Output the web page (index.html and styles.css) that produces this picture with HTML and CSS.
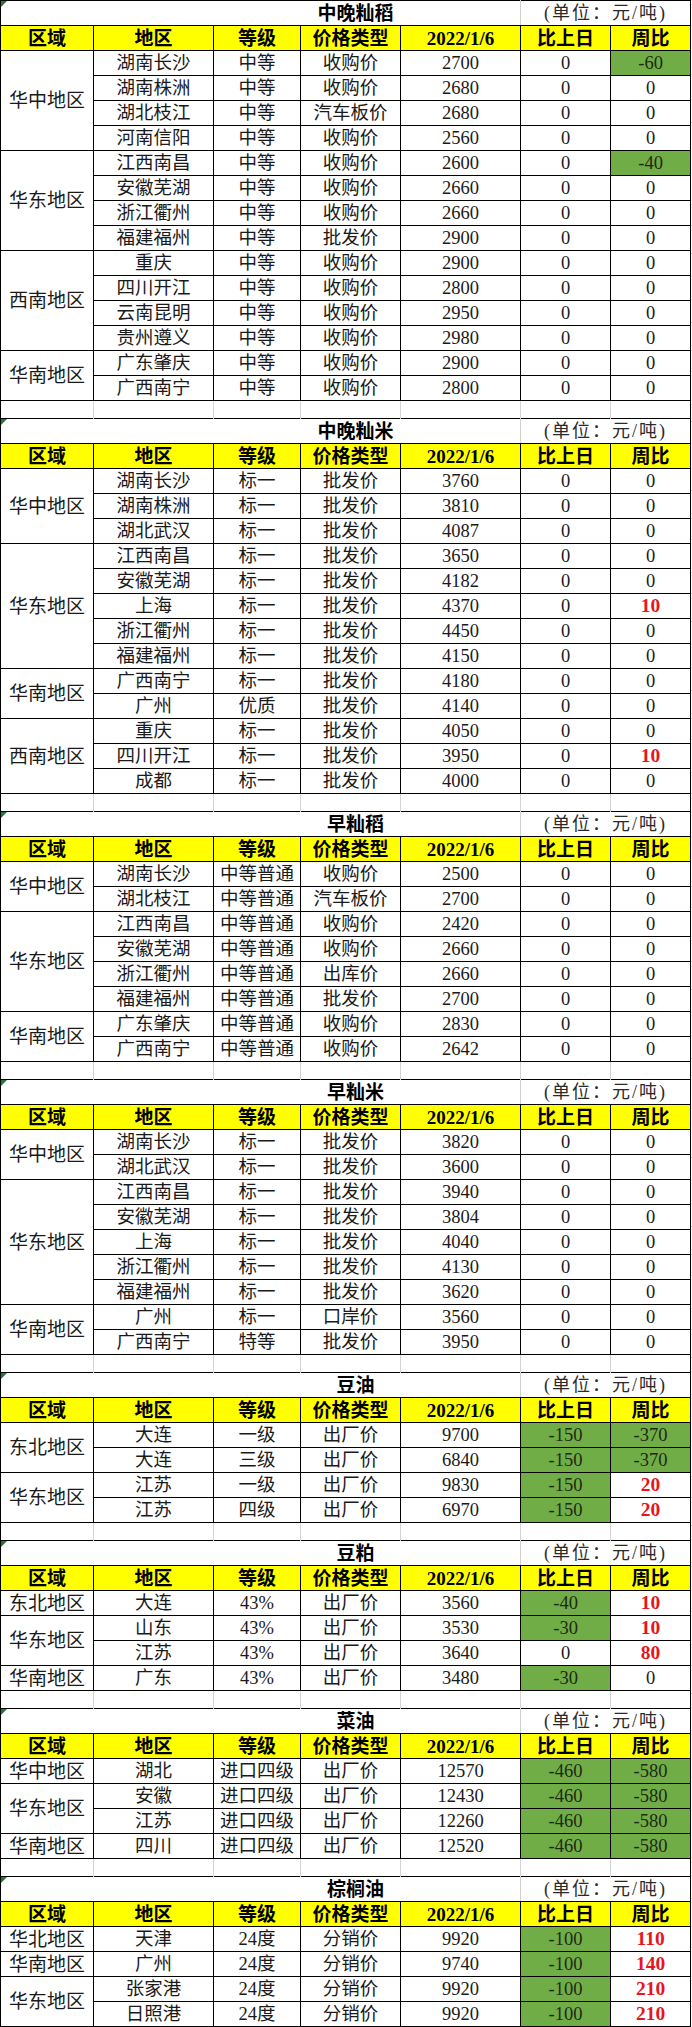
FILE: index.html
```html
<!DOCTYPE html>
<html lang="zh-CN">
<head>
<meta charset="utf-8">
<title>粮油价格</title>
<link rel="stylesheet" href="styles.css">
</head>
<body>
<table class="sheet">
<colgroup>
<col class="c1"><col class="c2"><col class="c3"><col class="c4"><col class="c5"><col class="c6"><col class="c7">
</colgroup>
<tbody>
<!-- 中晚籼稻 -->
<tr class="title"><td class="t-name" colspan="5">中晚籼稻</td><td class="t-unit" colspan="2">(单位：元/吨)</td></tr>
<tr class="head"><th>区域</th><th>地区</th><th>等级</th><th>价格类型</th><th class="hd">2022/1/6</th><th>比上日</th><th>周比</th></tr>
<tr class="row"><td class="reg" rowspan="4">华中地区</td><td>湖南长沙</td><td>中等</td><td>收购价</td><td>2700</td><td>0</td><td class="g">-60</td></tr>
<tr class="row"><td>湖南株洲</td><td>中等</td><td>收购价</td><td>2680</td><td>0</td><td>0</td></tr>
<tr class="row"><td>湖北枝江</td><td>中等</td><td>汽车板价</td><td>2680</td><td>0</td><td>0</td></tr>
<tr class="row"><td>河南信阳</td><td>中等</td><td>收购价</td><td>2560</td><td>0</td><td>0</td></tr>
<tr class="row"><td class="reg" rowspan="4">华东地区</td><td>江西南昌</td><td>中等</td><td>收购价</td><td>2600</td><td>0</td><td class="g">-40</td></tr>
<tr class="row"><td>安徽芜湖</td><td>中等</td><td>收购价</td><td>2660</td><td>0</td><td>0</td></tr>
<tr class="row"><td>浙江衢州</td><td>中等</td><td>收购价</td><td>2660</td><td>0</td><td>0</td></tr>
<tr class="row"><td>福建福州</td><td>中等</td><td>批发价</td><td>2900</td><td>0</td><td>0</td></tr>
<tr class="row"><td class="reg" rowspan="4">西南地区</td><td>重庆</td><td>中等</td><td>收购价</td><td>2900</td><td>0</td><td>0</td></tr>
<tr class="row"><td>四川开江</td><td>中等</td><td>收购价</td><td>2800</td><td>0</td><td>0</td></tr>
<tr class="row"><td>云南昆明</td><td>中等</td><td>收购价</td><td>2950</td><td>0</td><td>0</td></tr>
<tr class="row"><td>贵州遵义</td><td>中等</td><td>收购价</td><td>2980</td><td>0</td><td>0</td></tr>
<tr class="row"><td class="reg" rowspan="2">华南地区</td><td>广东肇庆</td><td>中等</td><td>收购价</td><td>2900</td><td>0</td><td>0</td></tr>
<tr class="row"><td>广西南宁</td><td>中等</td><td>收购价</td><td>2800</td><td>0</td><td>0</td></tr>
<tr class="blank"><td></td><td></td><td></td><td></td><td></td><td></td><td></td></tr>

<!-- 中晚籼米 -->
<tr class="title"><td class="t-name" colspan="5">中晚籼米</td><td class="t-unit" colspan="2">(单位：元/吨)</td></tr>
<tr class="head"><th>区域</th><th>地区</th><th>等级</th><th>价格类型</th><th class="hd">2022/1/6</th><th>比上日</th><th>周比</th></tr>
<tr class="row"><td class="reg" rowspan="3">华中地区</td><td>湖南长沙</td><td>标一</td><td>批发价</td><td>3760</td><td>0</td><td>0</td></tr>
<tr class="row"><td>湖南株洲</td><td>标一</td><td>批发价</td><td>3810</td><td>0</td><td>0</td></tr>
<tr class="row"><td>湖北武汉</td><td>标一</td><td>批发价</td><td>4087</td><td>0</td><td>0</td></tr>
<tr class="row"><td class="reg" rowspan="5">华东地区</td><td>江西南昌</td><td>标一</td><td>批发价</td><td>3650</td><td>0</td><td>0</td></tr>
<tr class="row"><td>安徽芜湖</td><td>标一</td><td>批发价</td><td>4182</td><td>0</td><td>0</td></tr>
<tr class="row"><td>上海</td><td>标一</td><td>批发价</td><td>4370</td><td>0</td><td class="r">10</td></tr>
<tr class="row"><td>浙江衢州</td><td>标一</td><td>批发价</td><td>4450</td><td>0</td><td>0</td></tr>
<tr class="row"><td>福建福州</td><td>标一</td><td>批发价</td><td>4150</td><td>0</td><td>0</td></tr>
<tr class="row"><td class="reg" rowspan="2">华南地区</td><td>广西南宁</td><td>标一</td><td>批发价</td><td>4180</td><td>0</td><td>0</td></tr>
<tr class="row"><td>广州</td><td>优质</td><td>批发价</td><td>4140</td><td>0</td><td>0</td></tr>
<tr class="row"><td class="reg" rowspan="3">西南地区</td><td>重庆</td><td>标一</td><td>批发价</td><td>4050</td><td>0</td><td>0</td></tr>
<tr class="row"><td>四川开江</td><td>标一</td><td>批发价</td><td>3950</td><td>0</td><td class="r">10</td></tr>
<tr class="row"><td>成都</td><td>标一</td><td>批发价</td><td>4000</td><td>0</td><td>0</td></tr>
<tr class="blank"><td></td><td></td><td></td><td></td><td></td><td></td><td></td></tr>

<!-- 早籼稻 -->
<tr class="title"><td class="t-name" colspan="5">早籼稻</td><td class="t-unit" colspan="2">(单位：元/吨)</td></tr>
<tr class="head"><th>区域</th><th>地区</th><th>等级</th><th>价格类型</th><th class="hd">2022/1/6</th><th>比上日</th><th>周比</th></tr>
<tr class="row"><td class="reg" rowspan="2">华中地区</td><td>湖南长沙</td><td>中等普通</td><td>收购价</td><td>2500</td><td>0</td><td>0</td></tr>
<tr class="row"><td>湖北枝江</td><td>中等普通</td><td>汽车板价</td><td>2700</td><td>0</td><td>0</td></tr>
<tr class="row"><td class="reg" rowspan="4">华东地区</td><td>江西南昌</td><td>中等普通</td><td>收购价</td><td>2420</td><td>0</td><td>0</td></tr>
<tr class="row"><td>安徽芜湖</td><td>中等普通</td><td>收购价</td><td>2660</td><td>0</td><td>0</td></tr>
<tr class="row"><td>浙江衢州</td><td>中等普通</td><td>出库价</td><td>2660</td><td>0</td><td>0</td></tr>
<tr class="row"><td>福建福州</td><td>中等普通</td><td>批发价</td><td>2700</td><td>0</td><td>0</td></tr>
<tr class="row"><td class="reg" rowspan="2">华南地区</td><td>广东肇庆</td><td>中等普通</td><td>收购价</td><td>2830</td><td>0</td><td>0</td></tr>
<tr class="row"><td>广西南宁</td><td>中等普通</td><td>收购价</td><td>2642</td><td>0</td><td>0</td></tr>
<tr class="blank"><td></td><td></td><td></td><td></td><td></td><td></td><td></td></tr>

<!-- 早籼米 -->
<tr class="title"><td class="t-name" colspan="5">早籼米</td><td class="t-unit" colspan="2">(单位：元/吨)</td></tr>
<tr class="head"><th>区域</th><th>地区</th><th>等级</th><th>价格类型</th><th class="hd">2022/1/6</th><th>比上日</th><th>周比</th></tr>
<tr class="row"><td class="reg" rowspan="2">华中地区</td><td>湖南长沙</td><td>标一</td><td>批发价</td><td>3820</td><td>0</td><td>0</td></tr>
<tr class="row"><td>湖北武汉</td><td>标一</td><td>批发价</td><td>3600</td><td>0</td><td>0</td></tr>
<tr class="row"><td class="reg" rowspan="5">华东地区</td><td>江西南昌</td><td>标一</td><td>批发价</td><td>3940</td><td>0</td><td>0</td></tr>
<tr class="row"><td>安徽芜湖</td><td>标一</td><td>批发价</td><td>3804</td><td>0</td><td>0</td></tr>
<tr class="row"><td>上海</td><td>标一</td><td>批发价</td><td>4040</td><td>0</td><td>0</td></tr>
<tr class="row"><td>浙江衢州</td><td>标一</td><td>批发价</td><td>4130</td><td>0</td><td>0</td></tr>
<tr class="row"><td>福建福州</td><td>标一</td><td>批发价</td><td>3620</td><td>0</td><td>0</td></tr>
<tr class="row"><td class="reg" rowspan="2">华南地区</td><td>广州</td><td>标一</td><td>口岸价</td><td>3560</td><td>0</td><td>0</td></tr>
<tr class="row"><td>广西南宁</td><td>特等</td><td>批发价</td><td>3950</td><td>0</td><td>0</td></tr>
<tr class="blank"><td></td><td></td><td></td><td></td><td></td><td></td><td></td></tr>

<!-- 豆油 -->
<tr class="title"><td class="t-name" colspan="5">豆油</td><td class="t-unit" colspan="2">(单位：元/吨)</td></tr>
<tr class="head"><th>区域</th><th>地区</th><th>等级</th><th>价格类型</th><th class="hd">2022/1/6</th><th>比上日</th><th>周比</th></tr>
<tr class="row"><td class="reg" rowspan="2">东北地区</td><td>大连</td><td>一级</td><td>出厂价</td><td>9700</td><td class="g">-150</td><td class="g">-370</td></tr>
<tr class="row"><td>大连</td><td>三级</td><td>出厂价</td><td>6840</td><td class="g">-150</td><td class="g">-370</td></tr>
<tr class="row"><td class="reg" rowspan="2">华东地区</td><td>江苏</td><td>一级</td><td>出厂价</td><td>9830</td><td class="g">-150</td><td class="r">20</td></tr>
<tr class="row"><td>江苏</td><td>四级</td><td>出厂价</td><td>6970</td><td class="g">-150</td><td class="r">20</td></tr>
<tr class="blank"><td></td><td></td><td></td><td></td><td></td><td></td><td></td></tr>

<!-- 豆粕 -->
<tr class="title"><td class="t-name" colspan="5">豆粕</td><td class="t-unit" colspan="2">(单位：元/吨)</td></tr>
<tr class="head"><th>区域</th><th>地区</th><th>等级</th><th>价格类型</th><th class="hd">2022/1/6</th><th>比上日</th><th>周比</th></tr>
<tr class="row"><td class="reg">东北地区</td><td>大连</td><td>43%</td><td>出厂价</td><td>3560</td><td class="g">-40</td><td class="r">10</td></tr>
<tr class="row"><td class="reg" rowspan="2">华东地区</td><td>山东</td><td>43%</td><td>出厂价</td><td>3530</td><td class="g">-30</td><td class="r">10</td></tr>
<tr class="row"><td>江苏</td><td>43%</td><td>出厂价</td><td>3640</td><td>0</td><td class="r">80</td></tr>
<tr class="row"><td class="reg">华南地区</td><td>广东</td><td>43%</td><td>出厂价</td><td>3480</td><td class="g">-30</td><td>0</td></tr>
<tr class="blank"><td></td><td></td><td></td><td></td><td></td><td></td><td></td></tr>

<!-- 菜油 -->
<tr class="title"><td class="t-name" colspan="5">菜油</td><td class="t-unit" colspan="2">(单位：元/吨)</td></tr>
<tr class="head"><th>区域</th><th>地区</th><th>等级</th><th>价格类型</th><th class="hd">2022/1/6</th><th>比上日</th><th>周比</th></tr>
<tr class="row"><td class="reg">华中地区</td><td>湖北</td><td>进口四级</td><td>出厂价</td><td>12570</td><td class="g">-460</td><td class="g">-580</td></tr>
<tr class="row"><td class="reg" rowspan="2">华东地区</td><td>安徽</td><td>进口四级</td><td>出厂价</td><td>12430</td><td class="g">-460</td><td class="g">-580</td></tr>
<tr class="row"><td>江苏</td><td>进口四级</td><td>出厂价</td><td>12260</td><td class="g">-460</td><td class="g">-580</td></tr>
<tr class="row"><td class="reg">华南地区</td><td>四川</td><td>进口四级</td><td>出厂价</td><td>12520</td><td class="g">-460</td><td class="g">-580</td></tr>
<tr class="blank"><td></td><td></td><td></td><td></td><td></td><td></td><td></td></tr>

<!-- 棕榈油 -->
<tr class="title"><td class="t-name" colspan="5">棕榈油</td><td class="t-unit" colspan="2">(单位：元/吨)</td></tr>
<tr class="head"><th>区域</th><th>地区</th><th>等级</th><th>价格类型</th><th class="hd">2022/1/6</th><th>比上日</th><th>周比</th></tr>
<tr class="row"><td class="reg">华北地区</td><td>天津</td><td>24度</td><td>分销价</td><td>9920</td><td class="g">-100</td><td class="r">110</td></tr>
<tr class="row"><td class="reg">华南地区</td><td>广州</td><td>24度</td><td>分销价</td><td>9740</td><td class="g">-100</td><td class="r">140</td></tr>
<tr class="row"><td class="reg" rowspan="2">华东地区</td><td>张家港</td><td>24度</td><td>分销价</td><td>9920</td><td class="g">-100</td><td class="r">210</td></tr>
<tr class="row"><td>日照港</td><td>24度</td><td>分销价</td><td>9920</td><td class="g">-100</td><td class="r">210</td></tr>
</tbody>
</table>
</body>
</html>
```

FILE: styles.css
```css
html, body {
  margin: 0;
  padding: 0;
  background: #ffffff;
}

.sheet {
  border-collapse: collapse;
  table-layout: fixed;
  width: 690px;
  font-family: "Liberation Serif", "Noto Sans CJK SC", serif;
  font-size: 18.5px;
  color: #1a1a1a;
}

.c1 { width: 93px; }
.c2 { width: 120px; }
.c3 { width: 87px; }
.c4 { width: 100px; }
.c5 { width: 120px; }
.c6 { width: 90px; }
.c7 { width: 80px; }

.sheet td,
.sheet th {
  padding: 0;
  text-align: center;
  vertical-align: middle;
  line-height: 1;
  white-space: nowrap;
  overflow: hidden;
}

/* title rows */
.title {
  height: 25px;
}
.title td {
  border-top: 1px solid #000;
  border-bottom: 1px solid #000;
}
.t-name {
  position: relative;
  border-left: 1px solid #000;
  border-right: 1px solid #cfcfcf;
  padding-left: 190px !important;
  font-weight: bold;
  font-size: 19px;
  color: #000;
}
.t-name::before {
  content: "";
  position: absolute;
  top: 0;
  left: 0;
  border-top: 6px solid #1f7a3a;
  border-right: 6px solid transparent;
}
.t-unit {
  border-right: 1px solid #000;
  font-size: 18px;
  letter-spacing: 2px;
  color: #2a2a2a;
}

/* header rows */
.head {
  height: 25px;
}
.head th {
  background: #ffff00;
  border: 1px solid #000;
  font-weight: bold;
  font-size: 19px;
  color: #000;
}
.head th.hd {
  font-size: 19px;
}

/* data rows */
.row {
  height: 25px;
}
.row td {
  border: 1px solid #000;
}
.row td.reg {
  font-size: 19px;
}
.row td.g {
  background: #70ad47;
  color: #1e2a14;
}
.row td.r {
  color: #e8141c;
  font-weight: bold;
  font-size: 19.5px;
}

/* blank spacer rows */
.blank {
  height: 18px;
}
.blank td {
  border-left: 1px solid #d4d4d4;
  border-right: 1px solid #d4d4d4;
}
.blank td:first-child {
  border-left: 1px solid #000;
}
.blank td:last-child {
  border-right: 1px solid #000;
}
```
